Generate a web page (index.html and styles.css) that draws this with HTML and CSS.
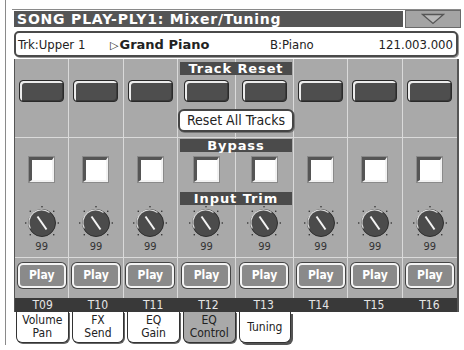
FILE: index.html
```html
<!DOCTYPE html>
<html lang="en">

<head>
    <meta charset="UTF-8">
    <meta name="viewport" content="width=device-width, initial-scale=1.0">
    <title>Song Play - Mixer/Tuning</title>
    <link rel="stylesheet" href="styles.css">
</head>

<body>
    <svg class="defs" width="0" height="0">
        <symbol id="knob" viewBox="0 0 34 34">
            <g fill="#3a3a3a">
                <rect x="16.3" y="0" width="1.4" height="1.4" />
                <rect x="4.6" y="4.6" width="1.4" height="1.4" />
                <rect x="28" y="4.6" width="1.4" height="1.4" />
                <rect x="0" y="16.3" width="1.4" height="1.4" />
                <rect x="32.6" y="16.3" width="1.4" height="1.4" />
                <rect x="4.6" y="28" width="1.4" height="1.4" />
                <rect x="28" y="28" width="1.4" height="1.4" />
            </g>
            <circle cx="17" cy="17" r="13.5" fill="#4b4b4b" stroke="#2e2e2e" stroke-width="1" />
            <path d="M5.3 22.5 A12.8 12.8 0 0 1 24.5 6.5" fill="none" stroke="#d8d8d8" stroke-width="1.2" />
            <line x1="12.5" y1="10.5" x2="21.5" y2="23.5" stroke="#f4f4f4" stroke-width="2" />
        </symbol>
    </svg>

    <div class="bezel">
        <div class="screen">
            <div class="title-bar">
                <div class="title">SONG PLAY-PLY1: Mixer/Tuning</div>
                <div class="menu-button">
                    <svg width="24" height="12" viewBox="0 0 24 12">
                        <polygon points="1.5,1.5 22.5,1.5 12,10.5" fill="#b8b8b8" stroke="#555" stroke-width="1.3" />
                    </svg>
                </div>
            </div>

            <div class="info-box">
                <span class="track">Trk:Upper 1</span>
                <span class="sound"><span class="arrow">▷</span>Grand Piano</span>
                <span class="bank">B:Piano</span>
                <span class="position">121.003.000</span>
            </div>

            <div class="mixer">
                <div class="strip">
                    <div class="reset-zone"><span class="reset-btn"></span></div>
                    <div class="trim-zone"><span class="check"></span><svg class="knob"><use href="#knob" /></svg><span class="value">99</span></div>
                    <div class="play-zone"><span class="play-btn">Play</span></div>
                </div>
                <div class="strip">
                    <div class="reset-zone"><span class="reset-btn"></span></div>
                    <div class="trim-zone"><span class="check"></span><svg class="knob"><use href="#knob" /></svg><span class="value">99</span></div>
                    <div class="play-zone"><span class="play-btn">Play</span></div>
                </div>
                <div class="strip">
                    <div class="reset-zone"><span class="reset-btn"></span></div>
                    <div class="trim-zone"><span class="check"></span><svg class="knob"><use href="#knob" /></svg><span class="value">99</span></div>
                    <div class="play-zone"><span class="play-btn">Play</span></div>
                </div>
                <div class="strip">
                    <div class="reset-zone"><span class="reset-btn"></span></div>
                    <div class="trim-zone"><span class="check"></span><svg class="knob"><use href="#knob" /></svg><span class="value">99</span></div>
                    <div class="play-zone"><span class="play-btn">Play</span></div>
                </div>
                <div class="strip">
                    <div class="reset-zone"><span class="reset-btn"></span></div>
                    <div class="trim-zone"><span class="check"></span><svg class="knob"><use href="#knob" /></svg><span class="value">99</span></div>
                    <div class="play-zone"><span class="play-btn">Play</span></div>
                </div>
                <div class="strip">
                    <div class="reset-zone"><span class="reset-btn"></span></div>
                    <div class="trim-zone"><span class="check"></span><svg class="knob"><use href="#knob" /></svg><span class="value">99</span></div>
                    <div class="play-zone"><span class="play-btn">Play</span></div>
                </div>
                <div class="strip">
                    <div class="reset-zone"><span class="reset-btn"></span></div>
                    <div class="trim-zone"><span class="check"></span><svg class="knob"><use href="#knob" /></svg><span class="value">99</span></div>
                    <div class="play-zone"><span class="play-btn">Play</span></div>
                </div>
                <div class="strip">
                    <div class="reset-zone"><span class="reset-btn"></span></div>
                    <div class="trim-zone"><span class="check"></span><svg class="knob"><use href="#knob" /></svg><span class="value">99</span></div>
                    <div class="play-zone"><span class="play-btn">Play</span></div>
                </div>

                <!-- labels sitting over tracks 4 and 5 -->
                <div class="overlay banner banner-reset">Track Reset</div>
                <div class="overlay reset-all">Reset All Tracks</div>
                <div class="overlay banner banner-bypass">Bypass</div>
                <div class="overlay banner banner-trim">Input Trim</div>

                <div class="track-names">
                    <span>T09</span><span>T10</span><span>T11</span><span>T12</span>
                    <span>T13</span><span>T14</span><span>T15</span><span>T16</span>
                </div>
            </div>

            <div class="tabs">
                <div class="tab">Volume<br>Pan</div>
                <div class="tab">FX<br>Send</div>
                <div class="tab">EQ<br>Gain</div>
                <div class="tab tab-dim">EQ<br>Control</div>
                <div class="tab tab-active">Tuning</div>
            </div>
        </div>
    </div>
</body>

</html>
```

FILE: styles.css
```css
* {
    box-sizing: border-box;
}

body {
    margin: 0;
    background-color: #fff;
    font-family: "DejaVu Sans", "Liberation Sans", sans-serif;
    font-stretch: condensed;
    color: #222;
}

.defs {
    position: absolute;
}

/* outer frame line on the left */
.bezel {
    margin-left: 5px;
    height: 345px;
    border-left: 1px solid #8a8a8a;
    padding-top: 9px;
}

.screen {
    margin-left: 6px;
    width: 449px;
    border-top: 1px solid #8a8a8a;
    padding-left: 1px;
}

/* title bar */
.title-bar {
    display: flex;
    align-items: center;
    gap: 2px;
    height: 18px;
    padding-left: 1px;
}
.title-bar .title {
    flex: 1;
    height: 16px;
    line-height: 16px;
    padding-left: 3px;
    background-color: #555;
    color: #fff;
    font-family: "DejaVu Sans", sans-serif;
    font-stretch: normal;
    font-weight: bold;
    font-size: 14px;
    letter-spacing: 0.8px;
}
.title-bar .menu-button {
    width: 56px;
    height: 18px;
    background-color: #a4a4a4;
    border: 1px solid #6a6a6a;
    display: flex;
    justify-content: center;
    align-items: center;
}

/* info box */
.info-box {
    margin: 3px 0 0 1px;
    width: 444px;
    height: 26px;
    border: 2px solid #4a4a4a;
    border-radius: 5px;
    background-color: #fff;
    box-shadow: 1px 1px 0 #999;
    display: grid;
    grid-template-columns: 92px 160px 1fr auto;
    align-items: center;
    padding: 0 3px 0 2px;
    font-size: 13px;
}
.info-box .sound {
    font-weight: bold;
    font-stretch: normal;
}
.info-box .arrow {
    font-weight: normal;
    font-size: 11px;
    margin-right: 1px;
}

/* mixer grid */
.mixer {
    margin: 2px 0 0 1px;
    width: 445px;
    display: grid;
    grid-template-columns: repeat(8, 1fr);
    grid-template-rows: auto 14px;
    background-color: #a9a9a9;
    border-left: 1px solid #555;
    border-right: 2px solid #555;
}
.strip {
    grid-row: 1;
    display: flex;
    flex-direction: column;
    border-right: 1px solid #dadada;
}
.strip:nth-child(1) { grid-column: 1; }
.strip:nth-child(2) { grid-column: 2; }
.strip:nth-child(3) { grid-column: 3; }
.strip:nth-child(4) { grid-column: 4; }
.strip:nth-child(5) { grid-column: 5; }
.strip:nth-child(6) { grid-column: 6; }
.strip:nth-child(7) { grid-column: 7; }
.strip:nth-child(8) { grid-column: 8; border-right: none; }

.reset-zone {
    height: 79px;
    padding-top: 21px;
    display: flex;
    justify-content: center;
    border-bottom: 1px solid #dadada;
}
.reset-btn {
    width: 45px;
    height: 22px;
    border-radius: 4px;
    background-color: #4e4e4e;
    border: 1px solid #2a2a2a;
    box-shadow: inset 2px 2px 0 #ececec, inset -1px -1px 0 #3a3a3a;
}

.trim-zone {
    height: 120px;
    display: flex;
    flex-direction: column;
    align-items: center;
    border-bottom: 1px solid #dadada;
}
.check {
    margin-top: 19px;
    width: 25px;
    height: 25px;
    background-color: #fff;
    border-style: solid;
    border-width: 3px 2px 2px 3px;
    border-color: #555 #f2f2f2 #f2f2f2 #555;
    box-shadow: 0 0 0 1px #8a8a8a;
}
.knob {
    margin-top: 24px;
    width: 34px;
    height: 34px;
}
.value {
    font-size: 11px;
    line-height: 11px;
    margin-top: 1px;
    color: #333;
}

.play-zone {
    height: 40px;
    padding-top: 5px;
    display: flex;
    justify-content: center;
}
.play-btn {
    width: 48px;
    height: 25px;
    border-radius: 5px;
    border: 2px solid #f4f4f4;
    background-color: #8a8a8a;
    box-shadow: 0 0 0 1px #444;
    color: #fff;
    font-weight: bold;
    font-size: 12px;
    line-height: 21px;
    text-align: center;
}

/* labels over tracks 4-5 */
.overlay {
    grid-row: 1;
    grid-column: 4 / span 2;
    align-self: start;
}
.banner {
    margin: 0 2px;
    height: 13px;
    background-color: #4b4b4b;
    color: #fff;
    font-stretch: normal;
    font-weight: bold;
    font-size: 13px;
    line-height: 13px;
    letter-spacing: 0.9px;
    text-align: center;
}
.banner-reset {
    margin-top: 3px;
}
.banner-bypass {
    margin-top: 80px;
}
.banner-trim {
    margin-top: 133px;
}
.reset-all {
    justify-self: center;
    margin-top: 50px;
    width: 116px;
    height: 23px;
    border: 2px solid #444;
    border-radius: 6px;
    background-color: #fff;
    box-shadow: 1px 1px 0 #777;
    font-size: 14px;
    line-height: 19px;
    text-align: center;
}

.track-names {
    grid-row: 2;
    grid-column: 1 / -1;
    display: grid;
    grid-template-columns: repeat(8, 1fr);
    background-color: #393939;
    color: #e6e6e6;
    font-size: 12px;
    line-height: 14px;
    text-align: center;
}

/* page tabs */
.tabs {
    margin-left: 1px;
    width: 445px;
    display: grid;
    grid-template-columns: repeat(8, 1fr);
}
.tab {
    margin: 0 1px 0 2px;
    height: 31px;
    background-color: #fff;
    border: 1px solid #333;
    border-top: none;
    border-radius: 0 0 6px 6px;
    box-shadow: 1px 1px 0 #666;
    font-size: 12px;
    line-height: 13px;
    text-align: center;
    padding-top: 2px;
}
.tab-dim {
    background-color: #a9a9a9;
}
.tab-active {
    padding-top: 9px;
    box-shadow: 2px 2px 0 #555;
}
```
